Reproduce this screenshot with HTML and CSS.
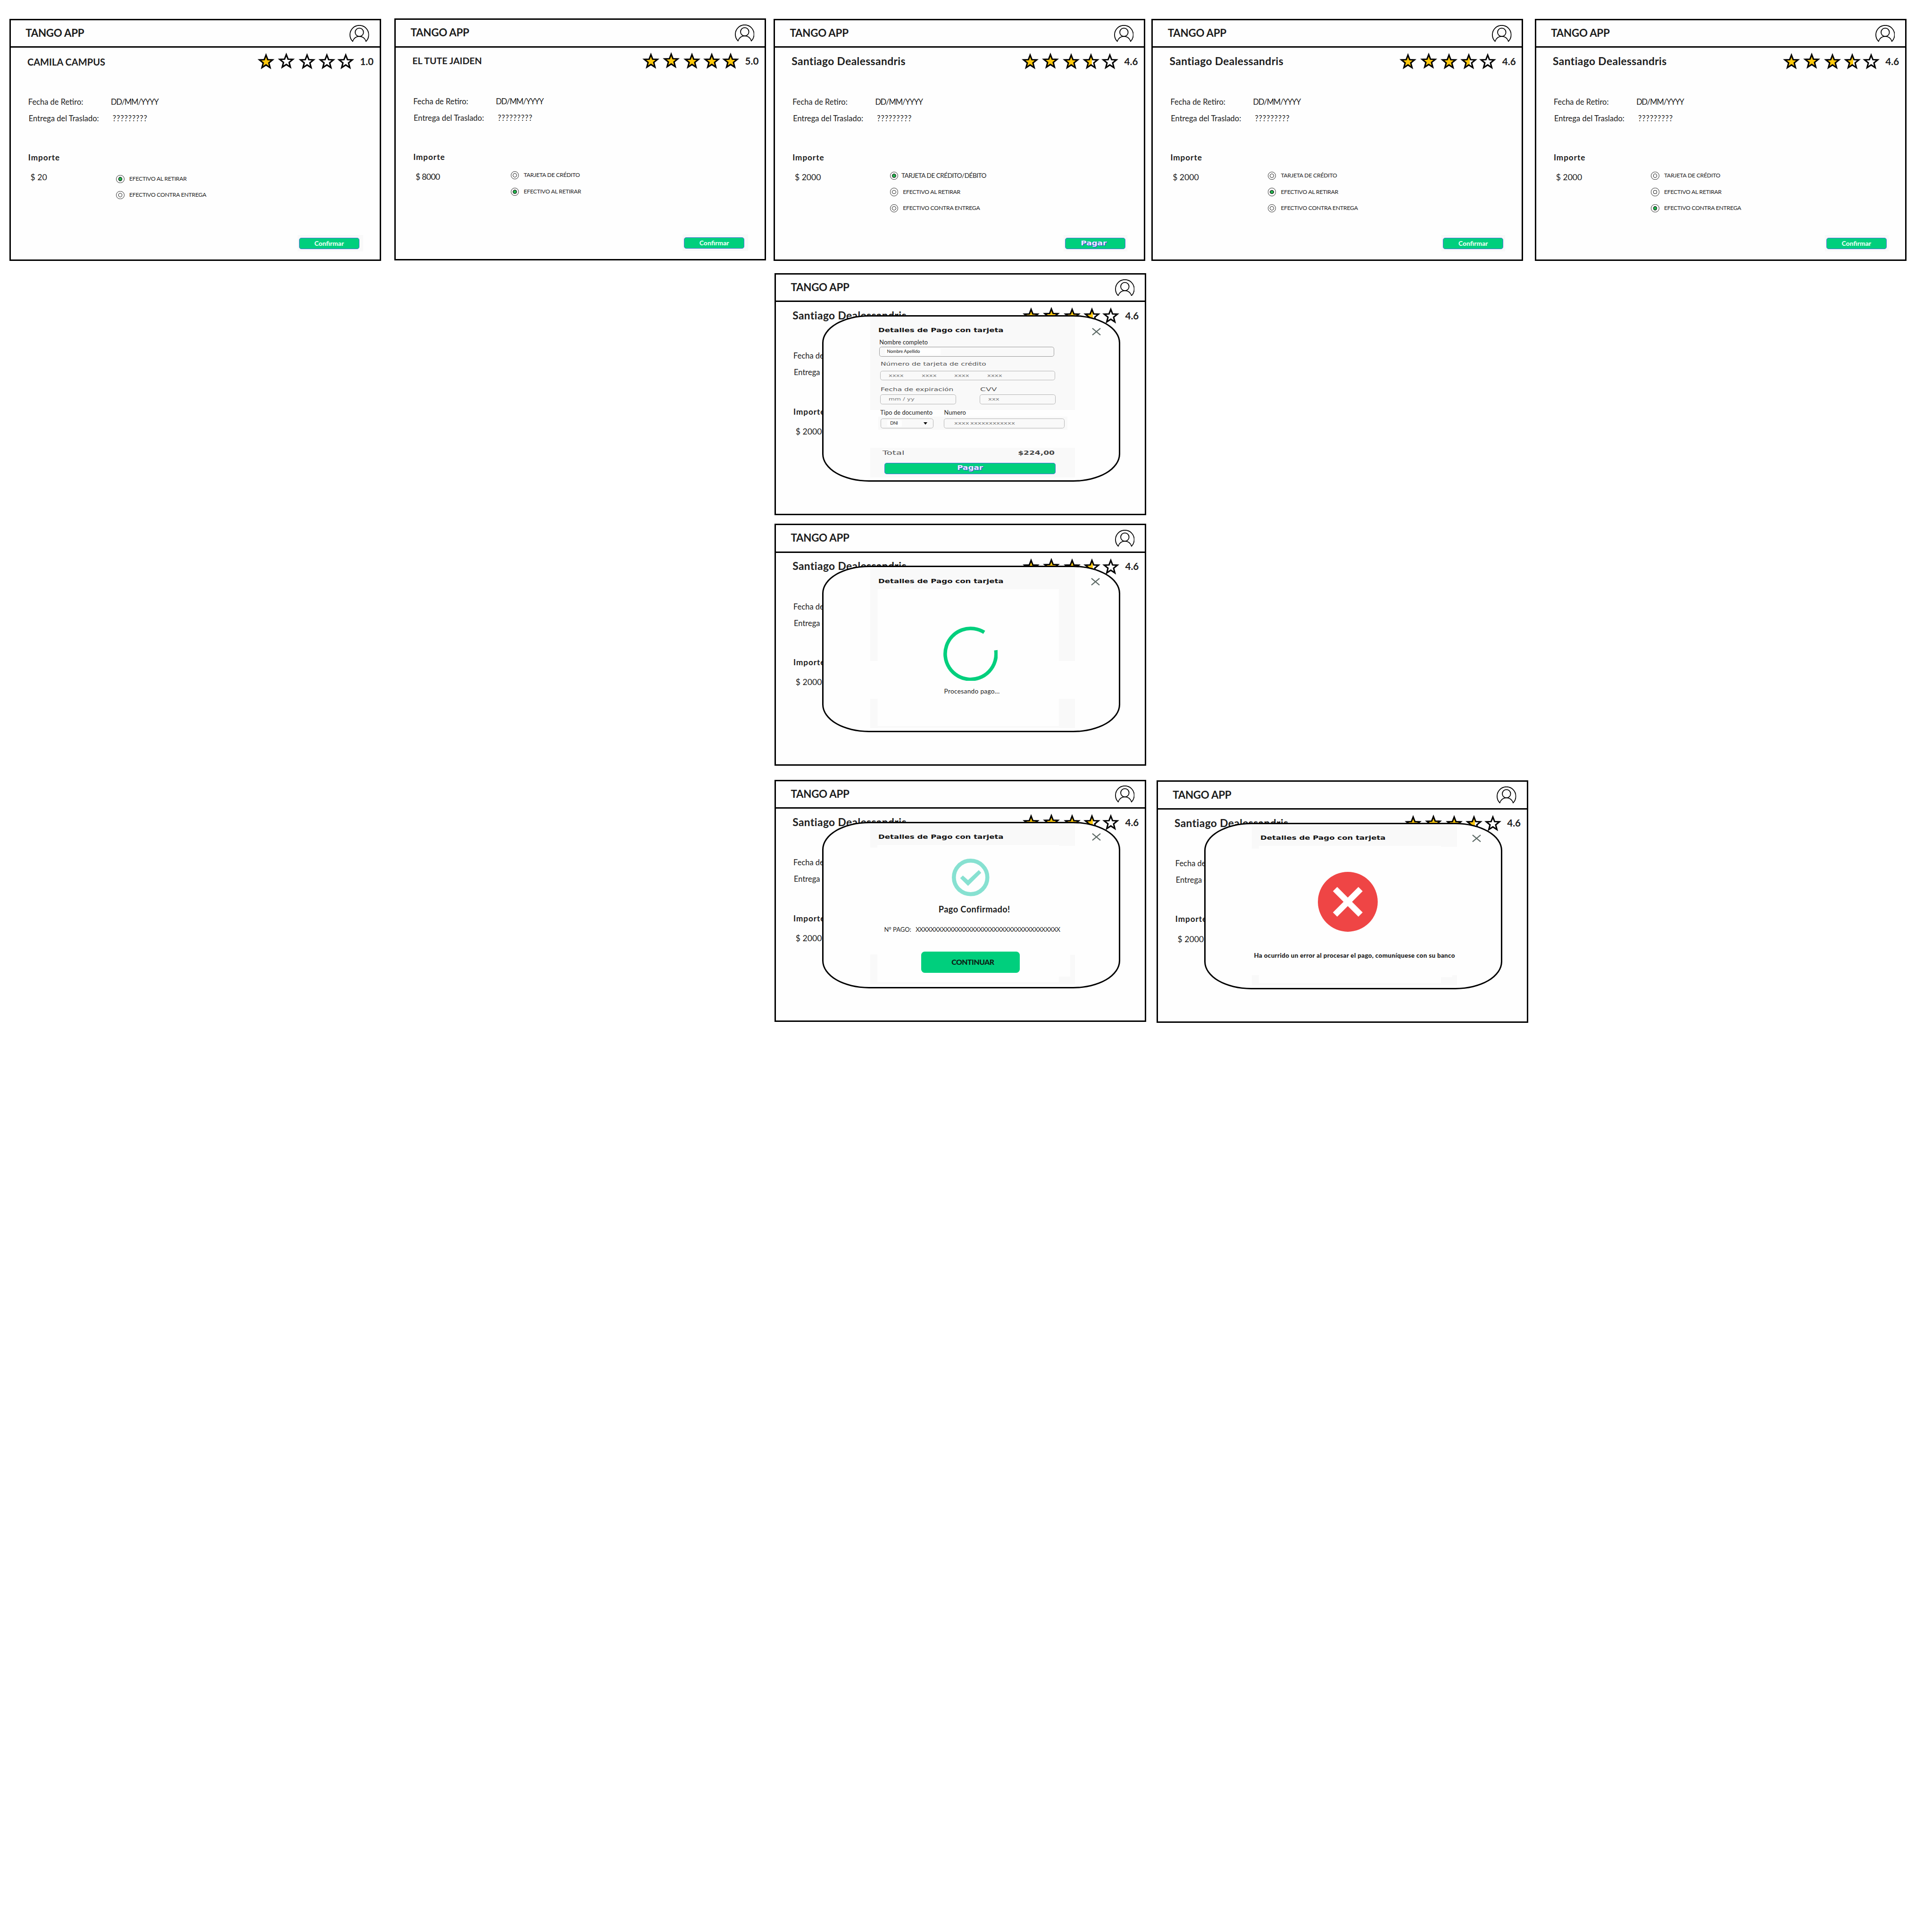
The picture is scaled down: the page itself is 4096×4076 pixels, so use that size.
FILE: index.html
```html
<!DOCTYPE html>
<html lang="es">
<head>
<meta charset="utf-8">
<title>Tango App</title>
<link rel="stylesheet" href="styles.css">
</head>
<body>
<svg class="defs" aria-hidden="true">
  <symbol id="avatar" viewBox="0 0 44 38"><g fill="none" stroke="#000" stroke-width="1.9"><path d="M7 36.5A21 21 0 1 1 37 36.5C34.500 30 29 25.500 22 25.500S9.500 30 7 36.500Z"/><circle cx="22" cy="16.300" r="9.300"/></g></symbol>
  <symbol id="star" viewBox="0 0 38 37"><path d="M19 5 22.900 15.200 33.700 15.700 25.300 22.500 28.100 33 19 27.100 9.900 33 12.700 22.500 4.300 15.700 15.100 15.200Z" stroke="#000" stroke-width="3.200" stroke-miterlimit="4"/></symbol>
  <symbol id="half" viewBox="0 0 38 37"><path d="M19 5 22.900 15.200 33.700 15.700 25.300 22.500 28.100 33 19 27.100Z" fill="#fff"/><path d="M19 5 21 10V28.400L19 27.100 9.900 33 12.700 22.500 4.300 15.700 15.100 15.200Z" fill="#ffc90e"/><path d="M19 5 22.900 15.200 33.700 15.700 25.300 22.500 28.100 33 19 27.100 9.900 33 12.700 22.500 4.300 15.700 15.100 15.200Z" fill="none" stroke="#000" stroke-width="3.200" stroke-miterlimit="4"/></symbol>
  <symbol id="close" viewBox="0 0 20 17"><path d="M1 1 19 16M19 1 1 16" stroke="#5b6864" stroke-width="2.300" fill="none"/></symbol>
</svg>
<main class="board">

  <section class="screen s1">
    <header class="bar"><h1>TANGO APP</h1><svg class="avatar"><use href="#avatar"/></svg></header>
    <div class="profile"><h2 class="caps wide">CAMILA CAMPUS</h2><div class="stars"><svg class="on"><use href="#star"/></svg><svg><use href="#star"/></svg><svg><use href="#star"/></svg><svg><use href="#star"/></svg><svg><use href="#star"/></svg></div><span class="score">1.0</span></div>
    <dl class="dates"><dt>Fecha de Retiro:</dt><dd class="date">DD/MM/YYYY</dd><dt class="in">Entrega del Traslado:</dt><dd class="unk">?????????</dd></dl>
    <h3>Importe</h3>
    <div class="payment"><span class="amount">$ 20</span><ul class="options short"><li class="sel">EFECTIVO AL RETIRAR</li><li>EFECTIVO CONTRA ENTREGA</li></ul></div>
    <footer class="halo"><button class="btn">Confirmar</button></footer>
  </section>

  <section class="screen s2">
    <header class="bar"><h1>TANGO APP</h1><svg class="avatar"><use href="#avatar"/></svg></header>
    <div class="profile"><h2 class="caps">EL TUTE JAIDEN</h2><div class="stars"><svg class="on"><use href="#star"/></svg><svg class="on"><use href="#star"/></svg><svg class="on"><use href="#star"/></svg><svg class="on"><use href="#star"/></svg><svg class="on"><use href="#star"/></svg></div><span class="score">5.0</span></div>
    <dl class="dates"><dt>Fecha de Retiro:</dt><dd class="date">DD/MM/YYYY</dd><dt class="in">Entrega del Traslado:</dt><dd class="unk">?????????</dd></dl>
    <h3>Importe</h3>
    <div class="payment"><span class="amount">$ 8000</span><ul class="options"><li>TARJETA DE CRÉDITO</li><li class="sel">EFECTIVO AL RETIRAR</li></ul></div>
    <footer class="halo"><button class="btn">Confirmar</button></footer>
  </section>

  <section class="screen s3">
    <header class="bar"><h1>TANGO APP</h1><svg class="avatar"><use href="#avatar"/></svg></header>
    <div class="profile"><h2>Santiago Dealessandris</h2><div class="stars"><svg class="on"><use href="#star"/></svg><svg class="on"><use href="#star"/></svg><svg class="on"><use href="#star"/></svg><svg><use href="#half"/></svg><svg><use href="#star"/></svg></div><span class="score">4.6</span></div>
    <dl class="dates"><dt>Fecha de Retiro:</dt><dd class="date">DD/MM/YYYY</dd><dt class="in">Entrega del Traslado:</dt><dd class="unk">?????????</dd></dl>
    <h3>Importe</h3>
    <div class="payment"><span class="amount">$ 2000</span><ul class="options"><li class="sel big">TARJETA DE CRÉDITO/DÉBITO</li><li>EFECTIVO AL RETIRAR</li><li>EFECTIVO CONTRA ENTREGA</li></ul></div>
    <footer class="halo"><button class="btn pay"><span>Pagar</span></button></footer>
  </section>

  <section class="screen s4">
    <header class="bar"><h1>TANGO APP</h1><svg class="avatar"><use href="#avatar"/></svg></header>
    <div class="profile"><h2>Santiago Dealessandris</h2><div class="stars"><svg class="on"><use href="#star"/></svg><svg class="on"><use href="#star"/></svg><svg class="on"><use href="#star"/></svg><svg><use href="#half"/></svg><svg><use href="#star"/></svg></div><span class="score">4.6</span></div>
    <dl class="dates"><dt>Fecha de Retiro:</dt><dd class="date">DD/MM/YYYY</dd><dt class="in">Entrega del Traslado:</dt><dd class="unk">?????????</dd></dl>
    <h3>Importe</h3>
    <div class="payment"><span class="amount">$ 2000</span><ul class="options"><li>TARJETA DE CRÉDITO</li><li class="sel">EFECTIVO AL RETIRAR</li><li>EFECTIVO CONTRA ENTREGA</li></ul></div>
    <footer class="halo"><button class="btn">Confirmar</button></footer>
  </section>

  <section class="screen s5">
    <header class="bar"><h1>TANGO APP</h1><svg class="avatar"><use href="#avatar"/></svg></header>
    <div class="profile"><h2>Santiago Dealessandris</h2><div class="stars"><svg class="on"><use href="#star"/></svg><svg class="on"><use href="#star"/></svg><svg class="on"><use href="#star"/></svg><svg><use href="#half"/></svg><svg><use href="#star"/></svg></div><span class="score">4.6</span></div>
    <dl class="dates"><dt>Fecha de Retiro:</dt><dd class="date">DD/MM/YYYY</dd><dt class="in">Entrega del Traslado:</dt><dd class="unk">?????????</dd></dl>
    <h3>Importe</h3>
    <div class="payment"><span class="amount">$ 2000</span><ul class="options"><li>TARJETA DE CRÉDITO</li><li>EFECTIVO AL RETIRAR</li><li class="sel">EFECTIVO CONTRA ENTREGA</li></ul></div>
    <footer class="halo"><button class="btn">Confirmar</button></footer>
  </section>

  <section class="screen s6">
    <header class="bar"><h1>TANGO APP</h1><svg class="avatar"><use href="#avatar"/></svg></header>
    <div class="profile"><h2>Santiago Dealessandris</h2><div class="stars"><svg class="on"><use href="#star"/></svg><svg class="on"><use href="#star"/></svg><svg class="on"><use href="#star"/></svg><svg><use href="#half"/></svg><svg><use href="#star"/></svg></div><span class="score">4.6</span></div>
    <dl class="dates"><dt>Fecha de Retiro:</dt><dt class="in">Entrega del Traslado:</dt></dl>
    <h3>Importe</h3>
    <div class="payment"><span class="amount">$ 2000</span></div>
    <div class="modal">
      <svg class="close"><use href="#close"/></svg>
      <div class="panel form">
        <h4><span>Detalles de Pago con tarjeta</span></h4>
        <label class="plain">Nombre completo</label>
        <div class="field name"><span class="typed">Nombre Apellido</span></div>
        <label class="soft number"><span>Número de tarjeta de crédito</span></label>
        <div class="field card"><span>xxxx</span><span>xxxx</span><span>xxxx</span><span>xxxx</span></div>
        <div class="pair">
          <div><label class="soft exp"><span>Fecha de expiración</span></label><div class="field half"><span>mm / yy</span></div></div>
          <div><label class="soft cvv"><span>CVV</span></label><div class="field half"><span>xxx</span></div></div>
        </div>
      </div>
      <div class="document">
        <div class="doctype"><label class="plain">Tipo de documento</label><div class="shade"><div class="field select"><span class="typed">DNI</span><i class="caret"></i></div></div></div>
        <div class="docnum"><label class="plain">Numero</label><div class="shade"><div class="field"><span class="lead">xxxx</span><span>xxxxxxxxxxxx</span></div></div></div>
      </div>
      <div class="panel total">
        <div class="sum"><span>Total</span><b><span>$224,00</span></b></div>
        <button class="btn pay"><span>Pagar</span></button>
      </div>
    </div>
  </section>

  <section class="screen s7">
    <header class="bar"><h1>TANGO APP</h1><svg class="avatar"><use href="#avatar"/></svg></header>
    <div class="profile"><h2>Santiago Dealessandris</h2><div class="stars"><svg class="on"><use href="#star"/></svg><svg class="on"><use href="#star"/></svg><svg class="on"><use href="#star"/></svg><svg><use href="#half"/></svg><svg><use href="#star"/></svg></div><span class="score">4.6</span></div>
    <dl class="dates"><dt>Fecha de Retiro:</dt><dt class="in">Entrega del Traslado:</dt></dl>
    <h3>Importe</h3>
    <div class="payment"><span class="amount">$ 2000</span></div>
    <div class="modal">
      <svg class="close"><use href="#close"/></svg>
      <div class="panel heading"><h4><span>Detalles de Pago con tarjeta</span></h4></div>
      <div class="state loading">
        <svg class="spinner" viewBox="0 0 122 122"><path d="M91.500 13A57 57 0 1 0 117.500 53" fill="none" stroke="#00cf7d" stroke-width="8"/></svg>
        <p>Procesando pago...</p>
      </div>
    </div>
  </section>

  <section class="screen s8">
    <header class="bar"><h1>TANGO APP</h1><svg class="avatar"><use href="#avatar"/></svg></header>
    <div class="profile"><h2>Santiago Dealessandris</h2><div class="stars"><svg class="on"><use href="#star"/></svg><svg class="on"><use href="#star"/></svg><svg class="on"><use href="#star"/></svg><svg><use href="#half"/></svg><svg><use href="#star"/></svg></div><span class="score">4.6</span></div>
    <dl class="dates"><dt>Fecha de Retiro:</dt><dt class="in">Entrega del Traslado:</dt></dl>
    <h3>Importe</h3>
    <div class="payment"><span class="amount">$ 2000</span></div>
    <div class="modal">
      <svg class="close"><use href="#close"/></svg>
      <div class="panel heading"><h4><span>Detalles de Pago con tarjeta</span></h4></div>
      <div class="state done">
        <svg class="tick" viewBox="0 0 84 84"><circle cx="42" cy="42" r="37.500" fill="none" stroke="#87e1d1" stroke-width="9"/><path d="M18.600 43.500 24.700 37.700 36.200 48 60.300 25.700 65.800 31.600 36.200 61Z" fill="#87e1d1"/></svg>
        <strong>Pago Confirmado!</strong>
        <div class="ref"><span>N° PAGO:</span><span class="code">XXXXXXXXXXXXXXXXXXXXXXXXXXXXXXXXXXXXXXX</span></div>
        <button class="next">CONTINUAR</button>
      </div>
    </div>
  </section>

  <section class="screen s9">
    <header class="bar"><h1>TANGO APP</h1><svg class="avatar"><use href="#avatar"/></svg></header>
    <div class="profile"><h2>Santiago Dealessandris</h2><div class="stars"><svg class="on"><use href="#star"/></svg><svg class="on"><use href="#star"/></svg><svg class="on"><use href="#star"/></svg><svg><use href="#half"/></svg><svg><use href="#star"/></svg></div><span class="score">4.6</span></div>
    <dl class="dates"><dt>Fecha de Retiro:</dt><dt class="in">Entrega del Traslado:</dt></dl>
    <h3>Importe</h3>
    <div class="payment"><span class="amount">$ 2000</span></div>
    <div class="modal">
      <svg class="close"><use href="#close"/></svg>
      <div class="panel heading"><h4><span>Detalles de Pago con tarjeta</span></h4></div>
      <div class="state failed">
        <svg class="cross" viewBox="0 0 134 134"><circle cx="67" cy="67" r="67" fill="#ef4545"/><path d="M38.500 38.500 95.500 95.500M95.500 38.500 38.500 95.500" stroke="#fff" stroke-width="13.500" fill="none"/></svg>
        <p>Ha ocurrido un error al procesar el pago, comuníquese con su banco</p>
      </div>
    </div>
  </section>
</main>
</body>
</html>
```
FILE: styles.css
```css
* { box-sizing: border-box; margin: 0; padding: 0; }
body { background: #fff; color: #1c1c1c; font-family: Lato, "Liberation Sans", sans-serif; }
.defs { position: absolute; width: 0; height: 0; }
.board { position: relative; width: 4325px; height: 4304px; zoom: .94705; }

/* screens pinned on the canvas */
.screen { position: absolute; display: flex; flex-direction: column; width: 832px; height: 542px; border: 3.200px solid #000; background: #fefefe; }
.s1 { left: 21px; top: 42px; }
.s2 { left: 883px; top: 41px; }
.s3 { left: 1732px; top: 42px; }
.s4 { left: 2578px; top: 42px; }
.s5 { left: 3436px; top: 42px; }
.s6 { left: 1734px; top: 611px; }
.s7 { left: 1734px; top: 1172px; }
.s8 { left: 1734px; top: 1745px; }
.s9 { left: 2589px; top: 1747px; }

.bar { display: flex; align-items: center; justify-content: space-between; height: 62px; padding: 0 23px 0 33px; border-bottom: 3.200px solid #000; }
h1 { padding-bottom: 1px; font-size: 23.600px; line-height: 30px; font-weight: 700; letter-spacing: -.3px; }
.avatar { width: 44px; height: 38px; }

.profile { display: flex; align-items: center; height: 60px; padding: 0 13px 0 37px; }
h2 { padding-top: 1px; font-size: 24px; line-height: 30px; font-weight: 700; letter-spacing: .43px; white-space: nowrap; }
h2.caps { font-size: 20.700px; letter-spacing: 0; }
h2.wide { font-size: 21.200px; padding-top: 2px; }
.stars { display: flex; margin-left: auto; }
.stars svg { width: 38px; height: 37px; fill: #fff; overflow: visible; margin-right: 7.600px; }
.stars svg.on { fill: #ffc90e; }
.stars svg:nth-child(2) { margin-top: -1px; margin-right: 8px; }
.stars svg:nth-child(3) { margin-right: 6.400px; }
.stars svg:nth-child(4) { margin-right: 4.200px; }
.stars svg:nth-child(5) { margin-right: 13.400px; }
.score { width: 31px; font-size: 21.800px; line-height: 30px; font-weight: 700; }

.dates { display: grid; grid-template-columns: 185px auto; grid-auto-rows: 37px; margin-top: 42.500px; padding-left: 39px; font-size: 17.400px; line-height: 37px; white-space: nowrap; }
.dates dt { grid-column: 1; }
.dates .in { padding-left: 1px; }
.dates .date { letter-spacing: -1.150px; }
.dates .unk { padding-left: 4px; letter-spacing: .9px; }
h3 { margin: 54px 0 0 39px; font-size: 18.200px; line-height: 30px; font-weight: 700; letter-spacing: .95px; }
.payment { display: flex; margin-top: 7.500px; padding-left: 44px; }
.amount { width: 213px; font-size: 18.600px; line-height: 44px; }
.s2 .amount { letter-spacing: -.7px; }
.options { list-style: none; font-size: 13px; line-height: 36.500px; letter-spacing: -.3px; white-space: nowrap; }
.options li { display: flex; align-items: center; gap: 11px; height: 36.500px; }
.options li::before { content: ""; width: 16px; height: 16px; border: 1px solid #222; border-radius: 50%; background: radial-gradient(circle, #fff 0 3.400px, #222 3.700px 4.400px, #fff 4.700px); }
.options li.sel::before { background: radial-gradient(circle, #22b14c 0 3.200px, #222 3.600px 4.500px, #fff 4.800px); }
.options .big { font-size: 14.400px; gap: 7.500px; letter-spacing: -.55px; }
.options.short { margin-left: -21px; padding-top: 7px; }

.halo { margin: auto 37px 18px auto; padding: 7px 4.500px 5px 3.500px; background: #f9f9f9; }
.s1 .halo, .s2 .halo { padding-right: 8.500px; }
.btn { display: flex; align-items: center; justify-content: center; width: 135px; height: 25.300px; border: 1px solid #4f6ee0; border-radius: 5px; background: #00cf7d; color: #e6fff2; font: 900 14.700px/20px Lato, sans-serif; }
.btn.pay { font: 700 14px/20px "DejaVu Sans", sans-serif; color: #f0f0ff; text-shadow: 0 0 1px #3434e8, 1px 1px 0 #3a3ae0; }
.btn.pay span { transform: translateX(-3px) scaleX(1.270); }

/* payment dialog */
.modal { position: absolute; left: 103.400px; top: 91px; width: 667.400px; height: 372.600px; padding: 1px 0 0 104px; border: 3.200px solid #000; border-radius: 105px / 62px; background: #fefefe; overflow: hidden; }
.close { position: absolute; left: 600.500px; top: 25.500px; width: 20px; height: 17px; }
.s7 .close { left: 598.500px; top: 24px; }
.s8 .close { top: 22px; }
.s9 .close { left: 596.500px; top: 24px; }
.panel { width: 459px; background: #f9f9f9; }
.panel span, .field > span:not(.typed) { display: inline-block; transform-origin: left; white-space: nowrap; }
.form { height: 208.500px; padding: 15.500px 0 0 20.800px; }
.heading { height: 48px; padding: 15.500px 0 0 18.600px; }
h4 { margin-left: -2.200px; font: 700 13.500px/30px "DejaVu Sans", sans-serif; color: #111; }
.heading h4 { margin-left: 0; }
h4 span { transform: scaleX(1.300); }
label { display: block; }
label.plain { font-size: 13.500px; line-height: 21.400px; letter-spacing: .12px; color: #222; }
label.soft { font: 11.300px/28px "DejaVu Sans", sans-serif; color: #555; padding: 3.300px 0 0 3px; }
.number span, .exp span { transform: scaleX(1.440); }
.cvv span { transform: scaleX(1.600); }
.field { display: flex; align-items: center; height: 22px; border: 1px solid #b4b4b4; border-radius: 5px; font: 10px/20px "DejaVu Sans", sans-serif; color: #777; background: #f9f9f9; }
.field > span:not(.typed) { transform: scaleX(1.410); }
.field.name { width: 391.700px; border-color: #999; padding-left: 11px; }
.field .typed { font: 10px/13px Lato, sans-serif; color: #111; background: #fefefe; padding: 0 46px 0 5px; }
.field.card { width: 391.700px; margin-left: 2.300px; padding-left: 17.400px; }
.field.card span { width: 73.600px; }
.pair { display: flex; gap: 53.300px; margin-left: 2.300px; padding-top: 10px; }
.pair label.soft { line-height: 21.400px; padding: 0 0 0 .7px; }
.field.half { width: 169.400px; padding-left: 17.400px; }
.document { display: flex; height: 84.500px; margin-left: 18.800px; }
.doctype { width: 143px; }
.document label.plain { line-height: 12px; padding-left: 4px; margin-bottom: 2.700px; }
.shade { background: #f9f9f9; padding: 4.300px 5.800px 3.500px 5.300px; height: 29.700px; }
.docnum .shade { padding-left: 3.700px; width: 280px; }
.docnum .field { width: 270px; padding-left: 21.600px; }
.docnum .lead { width: 36px; }
.field.select { width: 117.400px; padding: 0 12px 0 13px; justify-content: space-between; }
.select .typed { padding: 0 9px 0 7px; letter-spacing: -.4px; }
.caret { border: 5px solid transparent; border-top: 6px solid #000; border-bottom: 0; }
.total { height: 66px; padding: .5px 46px 0 27.800px; }
.sum { display: flex; justify-content: space-between; font: 13px/22px "DejaVu Sans", sans-serif; color: #555; }
.sum > span { transform: scaleX(1.620); }
.sum b { color: #444; }
.sum b span { transform: scaleX(1.390); transform-origin: right; }
.total .btn { width: 383.700px; margin: 10.600px 0 0 4.300px; }
.total .btn span { transform: scaleX(1.270); transform-origin: center; }

/* dialog states; the grey strips are the edges of the panel behind */
.state { --g: linear-gradient(#f9f9f9, #f9f9f9); display: flex; flex-direction: column; align-items: center; width: 459px; height: 311px; background-repeat: no-repeat; }
.loading { background-image: var(--g), var(--g), var(--g), var(--g), var(--g); background-size: 16.400px 161px, 36px 161px, 16.400px 66px, 36px 66px, 100% 4px; background-position: 0 0, 100% 0, 0 100%, 100% 100%, 0 100%; }
.done { background-image: var(--g), var(--g), var(--g), var(--g), var(--g), var(--g); background-size: 16px 6px, 36px 2px, 16px 66px, 11px 65px, 36px 17px, 100% 4px; background-position: 0 0, 100% 0, 0 100%, 100% 100%, 100% 100%, 0 100%; }
.failed { background-image: var(--g), var(--g), var(--g), var(--g), var(--g), var(--g); background-size: 16px 6px, 36px 2px, 16px 22px, 11px 22px, 36px 17px, 100% 4px; background-position: 0 0, 100% 0, 0 100%, 100% 100%, 100% 100%, 0 100%; }
.spinner { width: 122px; height: 122px; margin: 83.500px 0 0 -9px; }
.loading p { margin: 13.500px 0 0 -3px; font-size: 14.500px; line-height: 20px; letter-spacing: .3px; }
.tick { width: 84px; height: 84px; margin: 30.500px 0 0 -8px; }
.done strong { margin: 18.500px 0 0 8px; font-size: 19.300px; line-height: 22px; letter-spacing: .4px; }
.ref { display: flex; align-self: flex-start; gap: 10px; margin: 24px 0 0 31.500px; font-size: 13.700px; line-height: 20px; }
.code { letter-spacing: -.6px; }
.next { width: 221px; height: 48px; margin: 39px 0 0 -9px; padding-left: 10px; border: 0; border-radius: 8px; background: #00cf7d; color: #0c1c14; font: 900 16.700px/46px Lato, sans-serif; letter-spacing: -.5px; }
.cross { width: 134px; height: 134px; margin: 58.500px 0 0 -29px; }
.failed p { margin-top: 43px; font-size: 14.200px; font-weight: 900; line-height: 20px; letter-spacing: .35px; white-space: nowrap; }
```
